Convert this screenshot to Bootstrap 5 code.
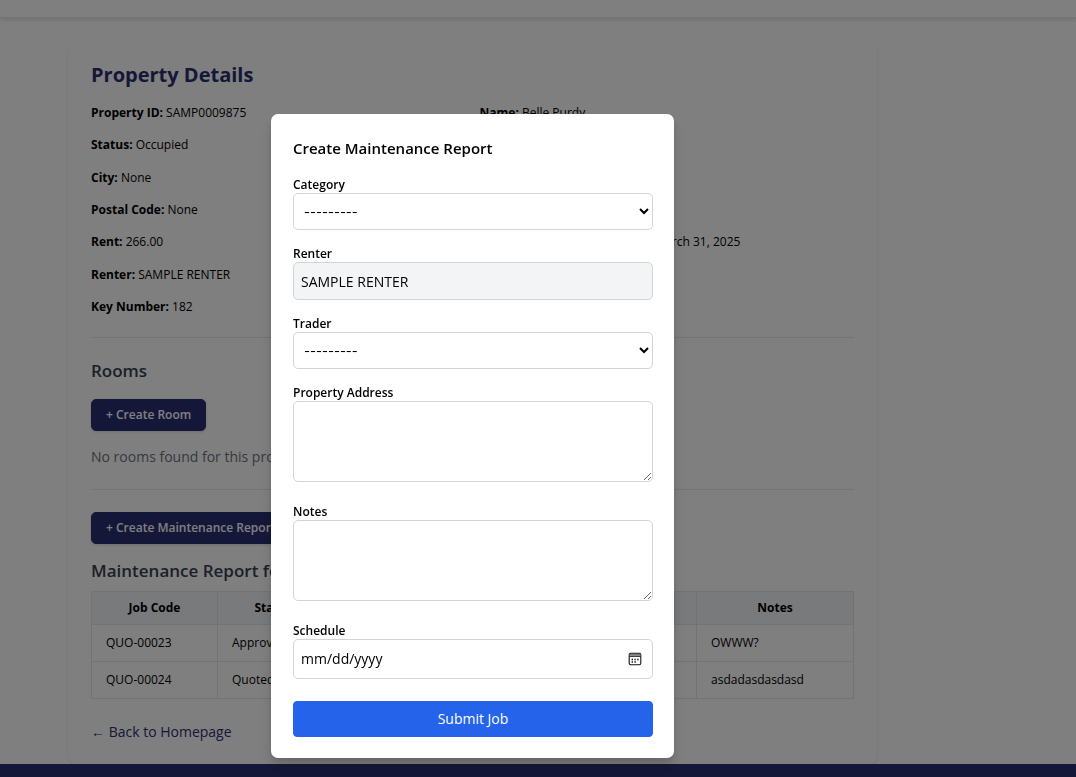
<!DOCTYPE html>
<html lang="en">
<head>
<meta charset="utf-8">
<meta name="viewport" content="width=device-width, initial-scale=1">
<title>Property Details</title>
<link rel="stylesheet" href="https://cdn.jsdelivr.net/npm/bootstrap@5.3.0/dist/css/bootstrap.min.css">
<style>
  :root {
    --navy: #2a2f72;
    --gutter-end: 131px;
    --line: #e5e7eb;
  }
  body {
    font-family: "Open Sans", "Noto Sans", sans-serif;
    font-size: 14px;
    line-height: 22px;
    color: #000;
    background: #fff;
  }
  .topbar { height: 18px; border-bottom: 1px solid var(--line); box-shadow: 0 2px 4px rgba(0,0,0,.12); }
  .page-area { padding: 25px var(--gutter-end) 0 0; }
  .panel {
    max-width: 809px;
    padding: 20px 23px 21px;
    border-radius: 8px;
    box-shadow: 0 1px 3px rgba(0,0,0,.1);
  }
  .panel-title { font-size: 20px; line-height: 24px; font-weight: 700; color: var(--navy); margin-bottom: 17px; }
  .facts { min-height: 212px; font-size: 12px; line-height: 18px; }
  .facts strong { font-weight: 700; }
  .fact-pair { grid-template-columns: 1fr 1fr; column-gap: 14px; }
  .divider { margin: 0; border-color: var(--line); opacity: 1; }
  .facts + .divider { margin-top: 21px; }
  .rooms { padding: 20px 0 21px; }
  .rooms .section-title, .rooms .btn { margin-bottom: 15px; }
  .reports { padding-top: 22px; }
  .reports .section-title { margin: 14px 0 7px; }
  .section-title { font-size: 17px; line-height: 26px; font-weight: 600; color: #374151; }
  .btn-navy {
    --bs-btn-color: #fff; --bs-btn-bg: var(--navy); --bs-btn-border-color: var(--navy);
    --bs-btn-hover-color: #fff; --bs-btn-hover-bg: #1e2259; --bs-btn-hover-border-color: #1e2259;
    --bs-btn-padding-x: 14px; --bs-btn-padding-y: 6px; --bs-btn-border-radius: 5px;
    --bs-btn-font-size: 12px; --bs-btn-font-weight: 600; --bs-btn-line-height: 18px;
    box-shadow: 0 1px 3px rgba(0,0,0,.15);
  }
  .empty-note { color: #6b7280; }
  .job-table { table-layout: fixed; font-size: 12px; line-height: 18px; --bs-table-color: #000; border-color: var(--line); margin-bottom: 22px; }
  .job-table th { padding: 7px 14px; text-align: center; --bs-table-bg: #f1f5f9; }
  .job-table td { padding: 9px 14px; }
  .col-code { width: 126px; }
  .col-status { width: 112px; }
  .col-notes { width: 157px; }
  .back-link { color: var(--navy); }
  .site-footer { background: var(--navy); height: 96px; }
  .shade { background: rgba(0,0,0,.5); }
  .job-modal { padding-right: var(--gutter-end); overflow: hidden; }
  .job-modal .modal-dialog { max-width: 403px; margin: 114px auto 19px; }
  .job-modal .modal-content {
    padding: 22px 21px 21px 22px; border: 0; border-radius: 7px; color: #000;
    box-shadow: 0 10px 15px rgba(0,0,0,.12), 0 4px 6px rgba(0,0,0,.1);
  }
  .modal-heading { font-size: 15px; line-height: 24px; font-weight: 600; margin-bottom: 17px; }
  .field { margin-bottom: 16px; }
  .field-tall { margin-bottom: 22px; }
  .field-label { display: block; font-size: 12px; line-height: 16px; font-weight: 600; }
  .field-box {
    display: block; width: 100%; padding: 7px; font-size: 14px; line-height: 22px;
    color: #000; background: #fff; border: 1px solid #d1d5db; border-radius: 5px;
  }
  select.field-box { height: 37px; padding: 7px 0 7px 6px; font-family: Inter, "Open Sans", sans-serif; font-size: 13px; }
  input.field-box { height: 38px; }
  input[type=date].field-box { height: 40px; padding-right: 10px; }
  input[type=date].field-box::-webkit-calendar-picker-indicator {
    width: 14px; height: 14px; padding: 0;
    background: url("data:image/svg+xml,%3Csvg xmlns='http://www.w3.org/2000/svg' viewBox='0 0 14 14'%3E%3Crect x='1.2' y='1.2' width='11.6' height='11.6' rx='1.6' fill='none' stroke='%23111' stroke-width='1.1'/%3E%3Cpath d='M1.5 2.9h11' stroke='%23777' stroke-width='1.6'/%3E%3Cpath d='M1.5 4.4h11' stroke='%23111' stroke-width='.9'/%3E%3Cpath d='M3.6 7.5h1.4M6.4 7.5h1.4M9.2 7.5h1.4M3.6 10h1.4M6.4 10h1.4' stroke='%23111' stroke-width='1.3'/%3E%3C/svg%3E") center / 14px no-repeat;
  }
  textarea.field-box { height: 81px; }
  .field-box[readonly] { background: #f3f4f6; }
  .btn-submit {
    --bs-btn-color: #fff; --bs-btn-bg: #2563eb; --bs-btn-border-color: #2563eb;
    --bs-btn-hover-color: #fff; --bs-btn-hover-bg: #1d4ed8; --bs-btn-hover-border-color: #1d4ed8;
    --bs-btn-padding-y: 6px; --bs-btn-border-radius: 4px;
    --bs-btn-font-size: 14px; --bs-btn-line-height: 22px;
  }
</style>
</head>
<body class="overflow-hidden">
<header class="topbar"></header>

<main class="page-area">
  <div class="panel mx-auto">
    <h1 class="panel-title">Property Details</h1>
    <div class="facts d-flex flex-column justify-content-between">
      <div class="fact-pair d-grid"><div><strong>Property ID:</strong> SAMP0009875</div><div><strong>Name:</strong> Belle Purdy</div></div>
      <div><strong>Status:</strong> Occupied</div>
      <div><strong>City:</strong> None</div>
      <div><strong>Postal Code:</strong> None</div>
      <div class="fact-pair d-grid"><div><strong>Rent:</strong> 266.00</div><div><strong>Lease Agreement Start Date:</strong> March 31, 2025</div></div>
      <div><strong>Renter:</strong> SAMPLE RENTER</div>
      <div><strong>Key Number:</strong> 182</div>
    </div>
    <hr class="divider">

    <section class="rooms">
      <h2 class="section-title">Rooms</h2>
      <button type="button" class="btn btn-navy">+ Create Room</button>
      <p class="empty-note mb-0">No rooms found for this property.</p>
    </section>
    <hr class="divider">

    <section class="reports">
      <button type="button" class="btn btn-navy">+ Create Maintenance Report</button>
      <h2 class="section-title">Maintenance Report for Property</h2>
      <table class="table table-bordered job-table">
        <thead>
          <tr><th class="col-code">Job Code</th><th class="col-status">Status</th><th>Category</th><th>Trader</th><th class="col-notes">Notes</th></tr>
        </thead>
        <tbody>
          <tr><td>QUO-00023</td><td>Approved</td><td></td><td></td><td>OWWW?</td></tr>
          <tr><td>QUO-00024</td><td>Quoted</td><td></td><td></td><td>asdadasdasdasd</td></tr>
        </tbody>
      </table>
      <a href="#" class="back-link text-decoration-none">← Back to Homepage</a>
    </section>
  </div>
</main>
<footer class="site-footer"></footer>

<div class="modal shade job-modal d-block" role="dialog" aria-modal="true" aria-labelledby="jobTitle">
  <div class="modal-dialog">
    <form class="modal-content">
      <h2 class="modal-heading" id="jobTitle">Create Maintenance Report</h2>
      <div class="field">
        <label class="field-label" for="category">Category</label>
        <select class="field-box" id="category"><option>---------</option></select>
      </div>
      <div class="field">
        <label class="field-label" for="renter">Renter</label>
        <input class="field-box" id="renter" type="text" value="SAMPLE RENTER" readonly>
      </div>
      <div class="field">
        <label class="field-label" for="trader">Trader</label>
        <select class="field-box" id="trader"><option>---------</option></select>
      </div>
      <div class="field-tall">
        <label class="field-label" for="address">Property Address</label>
        <textarea class="field-box" id="address"></textarea>
      </div>
      <div class="field-tall">
        <label class="field-label" for="notes">Notes</label>
        <textarea class="field-box" id="notes"></textarea>
      </div>
      <div class="field-tall">
        <label class="field-label" for="schedule">Schedule</label>
        <input class="field-box" id="schedule" type="date">
      </div>
      <button type="submit" class="btn btn-submit w-100">Submit Job</button>
    </form>
  </div>
</div>
<script src="https://cdn.jsdelivr.net/npm/bootstrap@5.3.0/dist/js/bootstrap.bundle.min.js"></script>
</body>
</html>
